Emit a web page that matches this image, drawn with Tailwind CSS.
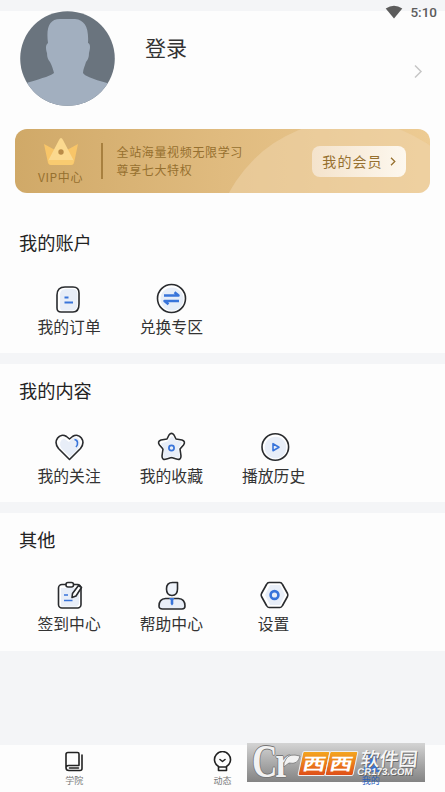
<!DOCTYPE html>
<html lang="zh-CN">
<head>
<meta charset="utf-8">
<meta name="viewport" content="width=device-width, initial-scale=1">
<title>我的</title>
<script src="https://cdn.jsdelivr.net/npm/@tailwindcss/browser@4"></script>
</head>
<body class="relative flex h-[792px] w-[445px] flex-col overflow-hidden bg-[#f4f5f7] font-['Noto_Sans_CJK_SC',sans-serif] text-[#333]">
  <!-- Status bar -->
  <div class="absolute top-[3px] right-[8px] z-10 flex h-[18px] items-center gap-[7px] text-[#5c5c5c]">
    <svg class="h-[14px] w-[18px]" viewBox="0 0 18 14"><path d="M.7 3.5Q9-1.8 17.300 3.500L9 13.500Z" fill="currentColor"/></svg>
    <span class="font-[Roboto,sans-serif] text-[13.500px] leading-[18px] font-medium">5:10</span>
  </div>

  <header class="mt-[11px] h-[205px] shrink-0 bg-[#fdfdfd]">
    <div class="flex h-[118px] pl-[20px]">
      <svg class="h-[95px] w-[95px]" viewBox="0 0 95 95">
        <defs><clipPath id="av"><circle cx="47.500" cy="47.500" r="47.300"/></clipPath></defs>
        <g clip-path="url(#av)">
          <rect width="95" height="95" fill="#6a747e"/>
          <path d="M28 32C26 17 29 8 40 8H55C65 9 69 17 68 32C71 33 70 38 69 42Q69 48 66 51C65 55 63 58 63 62Q65 66 87 72L96 80V96H-1V76L8 71.500Q31 65 34 62C33 58 32 55 30 51Q27 48 27 42C26 39 25 34 28 32Z" fill="#a2afbf"/>
        </g>
      </svg>
      <h1 class="mt-[20px] ml-[30px] text-[21px] leading-[32px]">登录</h1>
      <svg class="mt-[53px] mr-[22px] ml-auto h-[15px] w-[10px]" viewBox="0 0 10 15" fill="none" stroke="#c6c6c6" stroke-width="1.500"><path d="M2 1.500L8 7.500L2 13.500"/></svg>
    </div>
    <!-- Membership banner -->
    <div class="relative mx-[15px] flex h-[64px] overflow-hidden rounded-[12px] bg-linear-to-r from-[#d0a968] via-[#e0bb7f] to-[#edcb93] text-[#96702f]">
      <div class="absolute top-[-9px] left-[198px] h-[274px] w-[274px] rounded-full bg-[#efd6ae]/50"></div>
      <div class="relative flex w-[86px] flex-col items-center pl-[5px]">
        <svg class="mt-[8px] h-[29px] w-[36px]" viewBox="0 0 36 29">
          <path d="M1 7L12 13L18 2L24 13L35 7L31 26Q30.500 28 28 28H8Q5.500 28 5 26Z" fill="#f8c568"/>
          <path d="M18 1Q19 1 20 3L31 24H5L16 3Q17 1 18 1Z" fill="#fbd98f"/>
          <path d="M5 23H31L30 27L28 28H8L6 27Z" fill="#f9cb70"/>
          <circle cx="18" cy="15" r="2.700" fill="#b98b47"/>
        </svg>
        <span class="mt-[2px] text-[12px] leading-[17px] tracking-[.6px]">VIP中心</span>
      </div>
      <div class="mt-[14px] h-[36px] w-[1.500px] bg-[#a8803f]"></div>
      <div class="relative mt-[14px] ml-[14px] text-[12px] leading-[17.500px] tracking-[.65px] whitespace-nowrap">
        <p>全站海量视频无限学习</p>
        <p>尊享七大特权</p>
      </div>
      <div class="relative mt-[17px] mr-[24px] ml-auto flex h-[31px] w-[94px] items-center justify-center gap-[7px] rounded-[8px] bg-linear-to-r from-[#f4e3cc] to-[#fdf8ef] text-[14px]">
        <span class="-mt-[2px] leading-[20px] tracking-[1.100px]">我的会员</span>
        <svg class="h-[9px] w-[6px]" viewBox="0 0 6 9" fill="none" stroke="currentColor" stroke-width="1.300"><path d="M1 .7L4.800 4.500L1 8.300"/></svg>
      </div>
    </div>
  </header>

  <main class="flex shrink-0 flex-col gap-[11px]">
    <section class="h-[137px] bg-[#fdfdfd] px-[18px] pt-[14px]">
      <h2 class="pl-px text-[18.200px] leading-[24px] text-[#222]">我的账户</h2>
      <div class="mt-[29px] grid grid-cols-4">
        <div class="flex flex-col items-center">
          <svg class="h-[32px] w-[32px]" viewBox="0 0 32 32" fill="none" stroke="#292b2e" stroke-width="1.600">
            <path d="M12 4H20Q26 4 26 10V21Q26 29 20 29H8Q4 29 4 25V12Q4 4 12 4Z" fill="#fff"/>
            <path d="M13 6H20Q24.500 6 24.500 11V21Q24.500 27.500 19 27.500H10Q7 27.500 7 24V12Q7 6 13 6Z" fill="#e8eef8" stroke="none"/>
            <path d="M11.500 14.500h4M11.500 19.500h8.500" stroke="#3874da" stroke-width="1.800"/>
          </svg>
          <span class="text-[15.800px] leading-[24px]">我的订单</span>
        </div>
        <div class="flex flex-col items-center">
          <svg class="h-[32px] w-[32px]" viewBox="0 0 32 32" fill="none" stroke="#292b2e" stroke-width="1.600">
            <circle cx="16.500" cy="15.500" r="14" fill="#fff"/><circle cx="17" cy="16" r="11.500" fill="#e6edf8" stroke="none"/>
            <path d="M9 12.500H23.500L19.500 9.200M24 18H9.500L13.500 21.300" stroke="#3874da" stroke-width="2.500" stroke-linejoin="round"/>
          </svg>
          <span class="text-[15.800px] leading-[24px]">兑换专区</span>
        </div>
      </div>
    </section>

    <section class="h-[138px] bg-[#fdfdfd] px-[18px] pt-[14px]">
      <h2 class="pl-px text-[18.200px] leading-[24px] text-[#222]">我的内容</h2>
      <div class="mt-[29px] grid grid-cols-4">
        <div class="flex flex-col items-center">
          <svg class="h-[32px] w-[32px]" viewBox="0 0 32 32" fill="none" stroke="#292b2e" stroke-width="1.600" stroke-linejoin="round">
            <path d="M16.500 28.500L5.500 17.500C-.5 10 6.500 1 13.500 5.500L16.500 8L19.500 5.500C26.500 1 33.500 10 27.500 17.500Z" fill="#fff"/>
            <path d="M17 26L8 17Q5 10 11 7.500L16 11L20 7Q26 5 27 12Q27 15 25 18Z" fill="#e8eef8" stroke="none"/>
            <path d="M21.500 8.500C25 9 25.500 13 23 16" stroke="#3874da"/>
          </svg>
          <span class="mt-px text-[15.800px] leading-[24px]">我的关注</span>
        </div>
        <div class="flex flex-col items-center">
          <svg class="h-[32px] w-[32px]" viewBox="0 0 32 32" fill="none" stroke="#292b2e" stroke-width="1.600" stroke-linejoin="round">
            <path transform="translate(.5 0)" d="M13.500 4Q16 .8 18.500 4L20.500 8L26.500 9Q30.500 10.500 28 14L24.500 18L25.500 25Q25.500 29.500 21 28L16 26.500L11 28Q6.500 29.500 6.500 25L7.500 18L4 14Q1.500 10.500 5.500 9L11.500 8Z" fill="#fff"/>
            <path d="M17 6L20 10L26 11.500L22.500 17.500L24 26L16 24.500L9 26.500L10 18L7 13L13 11Z" fill="#e8eef8" stroke="#e8eef8"/>
            <circle cx="16.500" cy="17" r="2.600" stroke="#3874da" stroke-width="1.700"/>
          </svg>
          <span class="mt-px text-[15.800px] leading-[24px]">我的收藏</span>
        </div>
        <div class="flex flex-col items-center">
          <svg class="h-[32px] w-[32px]" viewBox="0 0 32 32" fill="none" stroke="#292b2e" stroke-width="1.600">
            <circle cx="17.300" cy="16" r="13.300" fill="#fff"/><circle cx="17.500" cy="16.500" r="10.800" fill="#e8eef8" stroke="none"/>
            <path d="M15 12.700V19.700L21 16.200Z" stroke="#3874da" stroke-linejoin="round"/>
          </svg>
          <span class="mt-px text-[15.800px] leading-[24px]">播放历史</span>
        </div>
      </div>
    </section>

    <section class="h-[138px] bg-[#fdfdfd] px-[18px] pt-[14px]">
      <h2 class="pl-px text-[18.200px] leading-[24px] text-[#222]">其他</h2>
      <div class="mt-[28px] grid grid-cols-4">
        <div class="flex flex-col items-center">
          <svg class="h-[32px] w-[32px]" viewBox="0 0 32 32" fill="none" stroke="#292b2e" stroke-width="1.600" stroke-linejoin="round">
            <rect x="5.500" y="5.500" width="22.500" height="23.500" rx="3.500" fill="#fff"/>
            <path d="M8 9H26V25L24 27.500H8Z" fill="#e8eef8" stroke="none"/>
            <rect x="13" y="3.500" width="7.500" height="4.500" rx="2" fill="#fff"/>
            <path d="M25.500 6.500L28.500 8.500L23 17L19 18.500L19.500 14.500Z" fill="#fff"/>
            <path d="M11 16h4M11 21.500h8.500" stroke="#3874da"/>
          </svg>
          <span class="mt-px text-[15.800px] leading-[24px]">签到中心</span>
        </div>
        <div class="flex flex-col items-center">
          <svg class="h-[32px] w-[32px]" viewBox="0 0 32 32" fill="none" stroke="#292b2e" stroke-width="1.600" stroke-linejoin="round">
            <path d="M17.500 3.500H22.500V10Q22.500 16.500 17 16.500Q11.500 16.500 11.500 10Q11.500 3.500 17.500 3.500Z" fill="#f0f4fb"/>
            <path d="M10.500 19.500H23.500Q30 20 30 27Q30 30 27 30H7.500Q4 30 4 27Q4 20 10.500 19.500Z" fill="#e8eef8"/>
            <path d="M14 19h5.500L18.300 21v4L17 26.500L15.700 25V21Z" fill="#3874da" stroke="none"/>
          </svg>
          <span class="mt-px text-[15.800px] leading-[24px]">帮助中心</span>
        </div>
        <div class="flex flex-col items-center">
          <svg class="h-[32px] w-[32px]" viewBox="0 0 32 32" fill="none" stroke="#292b2e" stroke-width="1.600" stroke-linejoin="round">
            <path transform="translate(.5 0)" d="M10.500 3.500H21.500Q23 3.500 24 5.500L29 14.500Q29.700 16 29 17.500L24 26.500Q23 28.500 21.500 28.500H10.500Q9 28.500 8 26.500L3 17.500Q2.300 16 3 14.500L8 5.500Q9 3.500 10.500 3.500Z" fill="#fff"/>
            <path d="M12 6H22L27 16L22 26H12L7 16Z" fill="#e8eef8" stroke="none"/>
            <circle cx="16.500" cy="16" r="3.900" stroke="#3874da" stroke-width="2.600"/>
          </svg>
          <span class="mt-px text-[15.800px] leading-[24px]">设置</span>
        </div>
      </div>
    </section>
  </main>

  <nav class="mt-auto grid h-[47px] grid-cols-3 bg-[#fdfdfd] text-[9px] leading-[12px] text-[#777]">
    <div class="flex flex-col items-center pt-[6px]">
      <svg class="h-[21px] w-[20px]" viewBox="0 0 20 21" fill="none" stroke="#222" stroke-width="1.600" stroke-linejoin="round" stroke-linecap="round">
        <path d="M15 14V3Q15 1.500 13.500 1.500H4Q2 1.500 2 3.500V17M18 4V17.500Q18 19.500 16 19.500H5Q2 19.500 2 16.800Q2 14.500 4.500 14.500H15M5.500 17H14.500"/>
      </svg>
      <span class="mt-[3px]">学院</span>
    </div>
    <div class="flex flex-col items-center pt-[6px]">
      <svg class="h-[21px] w-[20px]" viewBox="0 0 20 21" fill="none" stroke="#222" stroke-width="1.600" stroke-linejoin="round" stroke-linecap="round">
        <path d="M6.500 15.500A8 8 0 1 1 14.500 15.500V19.500H6.500ZM6.500 16H14.500M8 8.500L10.500 10.500L13 8.500"/>
      </svg>
      <span class="mt-[3px]">动态</span>
    </div>
    <div class="flex flex-col items-center pt-[6px] text-[#2862bd]">
      <div class="h-[21px]"></div>
      <span class="relative z-30 mt-[3px]">我的</span>
    </div>
  </nav>

  <!-- Site badge floating over the tab bar -->
  <div class="absolute top-[743px] left-[247px] z-20 flex h-[39px] w-[178px] bg-linear-to-b from-[#d2d2d2]/95 to-[#7d7d7d]/95">
    <div class="relative ml-[5px] h-[39px] w-[50px] shrink-0 font-['Liberation_Serif',serif] text-[#f2f2f2] [text-shadow:1px_0_0_#777,-1px_0_0_#777,0_1px_0_#777,0_-1px_0_#777]">
      <span class="block origin-left scale-x-75 text-[47px] leading-[37px] font-bold tracking-[-3px]">Cr</span>
      <svg class="absolute top-[11px] left-[31px] h-[14px] w-[18px]" viewBox="0 0 18 14" fill="#f2f2f2" stroke="#777" stroke-width=".8" stroke-linejoin="round"><path d="M3 5Q6-1 17 2Q15 11 6 9Q3 11 1 13Q0 9 3 5Z"/></svg>
    </div>
    <div class="mt-[8px] ml-[-2px] flex h-[25px]">
      <div class="flex w-[28px] -skew-x-12 items-center justify-center rounded-[2px] border border-[#eee] bg-linear-to-b from-[#f4a51f] to-[#df4d18] text-white"><span class="scale-x-110 scale-y-80 text-[21px] leading-[23px] font-bold">西</span></div>
      <div class="-ml-px flex w-[29px] -skew-x-12 items-center justify-center rounded-[2px] border border-[#eee] bg-linear-to-b from-[#f4a51f] to-[#df4d18] text-white"><span class="scale-x-110 scale-y-80 text-[21px] leading-[23px] font-bold">西</span></div>
    </div>
    <svg class="absolute top-[11px] left-[115px] h-[19px] w-[19px]" viewBox="0 0 20 21" fill="#3a72cd"><circle cx="10" cy="6" r="6"/><path d="M1 20Q1 10 10 10T19 20Z"/></svg>
    <div class="relative mt-[5px] ml-[4px] -skew-x-6 whitespace-nowrap text-[#f7f7f7] [text-shadow:1px_1px_0_#666]">
      <p class="text-[19px] leading-[19px] font-medium">软件园</p>
      <p class="-ml-[2px] font-['Liberation_Sans',sans-serif] text-[9.700px] leading-[9px] font-bold">CR173.COM</p>
    </div>
  </div>
</body>
</html>
